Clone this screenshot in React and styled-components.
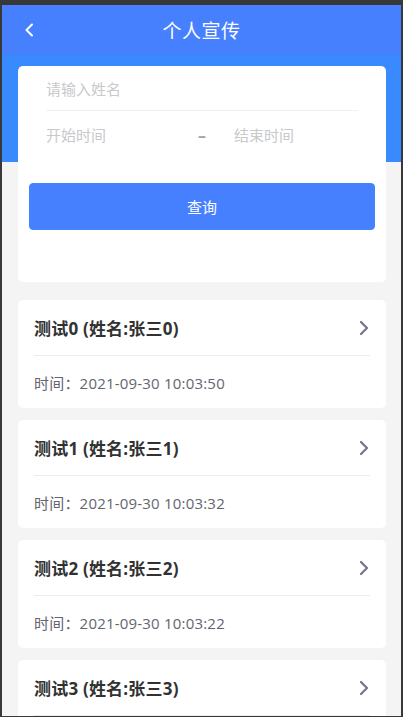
import React from "react";
import styled, { createGlobalStyle } from "styled-components";

const Global = createGlobalStyle`
  html, body { margin: 0; padding: 0; background: #383838; }
  * { box-sizing: border-box; }
  body { font-family: "Open Sans", "Noto Sans CJK SC", sans-serif; }
`;

const Frame = styled.div`
  width: 403px;
  height: 717px;
  padding: 5px 2px 1px 2px;
  background: #383838;
  overflow: hidden;
`;

const Screen = styled.div`
  height: 100%;
  background: #f4f4f4;
  overflow: hidden;
`;

const NavBar = styled.header`
  height: 50px;
  background: #4680ff;
  display: grid;
  grid-template-columns: 60px 1fr 60px;
  align-items: center;
  color: #fff;
`;

const BackBtn = styled.div`
  display: flex;
  align-items: center;
  padding-left: 22px;
  height: 100%;
`;

const NavTitle = styled.h1`
  margin: 0;
  text-align: center;
  font-size: 19px;
  font-weight: 400;
  font-family: "Noto Sans CJK SC", sans-serif;
  letter-spacing: 0.5px;
  line-height: 50px;
`;

const Hero = styled.section`
  background: linear-gradient(to bottom, #3a8aff 0, #3a8aff 107px, #f4f4f4 107px);
  padding: 11px 15px 0 16px;
`;

const SearchCard = styled.div`
  background: #fff;
  border-radius: 5px;
  padding-bottom: 52px;
`;

const Fields = styled.div`
  padding: 0 28px;
`;

const FieldRow = styled.div`
  height: ${(p) => p.$h}px;
  display: grid;
  grid-template-columns: ${(p) => (p.$range ? "1fr 32px 1fr" : "1fr")};
  align-items: center;
  border-bottom: ${(p) => (p.$divider ? "1px solid #eeeff2" : "none")};
`;

const Placeholder = styled.span`
  font-family: "Noto Sans CJK SC", sans-serif;
  font-size: 15px;
  color: #c8c9cc;
  padding-left: ${(p) => p.$indent || 0}px;
`;

const Dash = styled.span`
  text-align: center;
  font-family: "Open Sans", sans-serif;
  font-size: 16px;
  font-weight: 700;
  color: #a3a4a8;
`;

const QueryButton = styled.button`
  display: block;
  margin: 25px 11px 0;
  width: calc(100% - 22px);
  height: 47px;
  background: #4680ff;
  border: 1px solid #3d88ff;
  border-radius: 4px;
  color: #fff;
  font-family: "Noto Sans CJK SC", sans-serif;
  font-size: 15px;
  cursor: pointer;
`;

const List = styled.div`
  padding: 18px 15px 0 16px;
  display: flex;
  flex-direction: column;
  gap: 12px;
`;

const ItemCard = styled.div`
  background: #fff;
  border-radius: 5px;
  padding: 0 16px;
  flex-shrink: 0;
`;

const ItemHead = styled.div`
  height: 56px;
  display: flex;
  align-items: center;
  justify-content: space-between;
  border-bottom: 1px solid #ebedf0;
`;

const ItemTitle = styled.span`
  font-size: 17px;
  font-weight: 700;
  color: #323233;
  letter-spacing: 0.2px;
`;

const Arrow = styled.span`
  display: flex;
  margin-right: 1px;
`;

const ItemTime = styled.div`
  height: 52px;
  display: flex;
  align-items: center;
  font-size: 15px;
  color: #646570;
  letter-spacing: 0.2px;
`;

const items = [
  { t: "测试0 (姓名:张三0)", d: "2021-09-30 10:03:50" },
  { t: "测试1 (姓名:张三1)", d: "2021-09-30 10:03:32" },
  { t: "测试2 (姓名:张三2)", d: "2021-09-30 10:03:22" },
  { t: "测试3 (姓名:张三3)", d: "2021-09-30 10:03:12" },
];

export default function App() {
  return (
    <Frame>
      <Global />
      <Screen>
        <NavBar>
          <BackBtn>
            <svg width="10" height="14" viewBox="0 0 10 14">
              <polyline points="8,1.5 2.5,7 8,12.5" fill="none" stroke="#fff" strokeWidth="2" strokeLinecap="round" strokeLinejoin="round" />
            </svg>
          </BackBtn>
          <NavTitle>个人宣传</NavTitle>
          <div />
        </NavBar>
        <Hero>
          <SearchCard>
            <Fields>
              <FieldRow $h={45} $divider>
                <Placeholder>请输入姓名</Placeholder>
              </FieldRow>
              <FieldRow $h={47} $range>
                <Placeholder>开始时间</Placeholder>
                <Dash>–</Dash>
                <Placeholder $indent={16}>结束时间</Placeholder>
              </FieldRow>
            </Fields>
            <QueryButton>查询</QueryButton>
          </SearchCard>
        </Hero>
        <List>
          {items.map((it) => (
            <ItemCard key={it.t}>
              <ItemHead>
                <ItemTitle>{it.t}</ItemTitle>
                <Arrow>
                  <svg width="10" height="16" viewBox="0 0 10 16">
                    <polyline points="2,2 8,8 2,14" fill="none" stroke="#74758a" strokeWidth="2.2" strokeLinecap="round" strokeLinejoin="round" />
                  </svg>
                </Arrow>
              </ItemHead>
              <ItemTime>时间：{it.d}</ItemTime>
            </ItemCard>
          ))}
        </List>
      </Screen>
    </Frame>
  );
}
